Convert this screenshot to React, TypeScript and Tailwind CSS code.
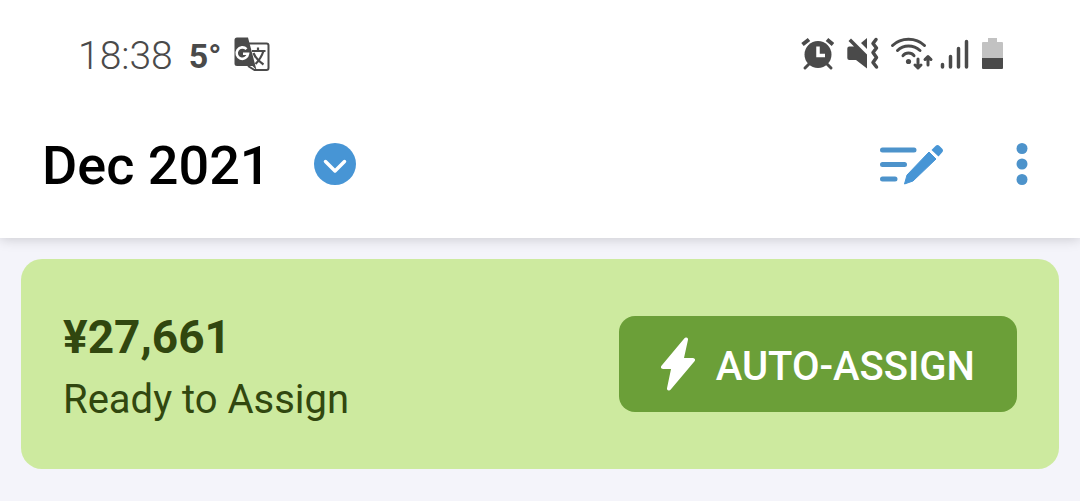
import type { ReactNode } from "react";

function StatusIcon({ width, children }: { width: number; children: ReactNode }) {
  return (
    <svg width={width} height="34" viewBox={`0 0 ${width} 34`} fill="none" className="shrink-0" aria-hidden="true">
      {children}
    </svg>
  );
}

function StatusBar() {
  return (
    <div className="flex items-center justify-between pl-[78px] pr-19 pt-8 text-[#4a4a4a]">
      <div className="flex items-center">
        <span className="pt-1 text-[39px] leading-10 font-light">18:38</span>
        <span className="ml-4 pt-1 text-[34px] leading-10 font-bold">5°</span>
        <span className="ml-3">
          <StatusIcon width={36}>
            <path d="M15 6.5h17.5a2 2 0 0 1 2 2V31a2 2 0 0 1-2 2H20.5L14 29" stroke="currentColor" strokeWidth="2" />
            <path d="M3 .5h11L22.5 33l-4-4H3a2.500 2.500 0 0 1-2.500-2.500V3A2.500 2.500 0 0 1 3 .5Z" fill="currentColor" />
            <path d="M12.500 12.200a5.700 5.700 0 1 0 1.500 4.600H9" stroke="white" strokeWidth="2.600" />
            <path d="M18 14h13.500M24 10.500V14M29.500 14c-2 6-4.500 9.500-8 13M19.500 16c2 5 5.500 8.500 10 11.500" stroke="currentColor" strokeWidth="2.200" />
          </StatusIcon>
        </span>
      </div>
      <div className="flex items-center">
        <StatusIcon width={34}>
          <path d="M9 27l-4 4M27 27l4 4" stroke="currentColor" strokeWidth="3" strokeLinecap="round" />
          <path d="M2.5 7.5 9 2.5M27 2.5 33 7.5" stroke="currentColor" strokeWidth="4" />
          <circle cx="18" cy="17.5" r="13.5" fill="currentColor" />
          <path d="M18 9.5V18.5H25" stroke="white" strokeWidth="3.5" />
        </StatusIcon>
        <span className="ml-3">
          <StatusIcon width={34}>
            <path d="M3.3 9.500H8L2.500 4 5 1.500 21 17.500V31.500L10 23H3.300a2 2 0 0 1-2-2V11.500a2 2 0 0 1 2-2Z" fill="currentColor" />
            <path d="M15 6 21 1v11Z" fill="currentColor" />
            <path
              d="M30 2.5 27 6.5 30.5 11 27 15.5 30.5 20.5 27 25.5 30.5 30"
              stroke="currentColor"
              strokeWidth="3.5"
              strokeLinecap="round"
              strokeLinejoin="round"
            />
          </StatusIcon>
        </span>
        <span className="ml-2.5">
          <StatusIcon width={44}>
            <g stroke="currentColor" strokeWidth="3" strokeLinecap="round" strokeLinejoin="round">
              <path d="M2.5 8.5Q9 2.3 18.500 2.3T34.5 8.5M7.5 13.5Q12 9 18.5 9T30 13.5M13 18.7Q15 16 18.5 16T24 18.7" />
              <path d="M28 22v9M25 28 28 31 31 28M38 28V19.5M35 22.5 38 19.5 41 22.5" />
            </g>
            <circle cx="18.5" cy="24.5" r="2.6" fill="currentColor" />
          </StatusIcon>
        </span>
        <span className="ml-1.5">
          <StatusIcon width={30}>
            <path
              d="M2.5 27.500V30M10.5 19.5V30M18.5 11.5V30M26.5 4.5V30"
              stroke="currentColor"
              strokeWidth="3.500"
              strokeLinecap="round"
            />
          </StatusIcon>
        </span>
        <span className="ml-3">
          <StatusIcon width={22}>
            <path d="M6 1h9v4h5a1 1 0 0 1 1 1v17H0V6a1 1 0 0 1 1-1h5Z" fill="#c2c2c2" />
            <path d="M0 21h21v10a1 1 0 0 1-1 1H1a1 1 0 0 1-1-1Z" fill="currentColor" />
          </StatusIcon>
        </span>
      </div>
    </div>
  );
}

function MonthBar() {
  return (
    <div className="flex items-center justify-between pl-[42px] pr-[51px] pt-14 pb-[42px]">
      <button type="button" className="flex items-center gap-[43px] text-black">
        <span className="pt-1 text-[54px] leading-[60px] font-medium">Dec 2021</span>
        <svg width="42" height="42" viewBox="0 0 42 42" fill="none" aria-hidden="true">
          <circle cx="21" cy="21" r="21" fill="#4795d5" />
          <path d="M11.5 18.5 21 28 30.5 18.5" stroke="white" strokeWidth="3.5" strokeLinecap="round" strokeLinejoin="round" />
        </svg>
      </button>
      <div className="flex items-center gap-[71px]">
        <button type="button" aria-label="Edit budget">
          <svg width="66" height="42" viewBox="0 0 66 42" fill="none" aria-hidden="true">
            <path d="M4.5 7H36M4.5 21.5H26.5M4.5 36H17" stroke="#4d93cb" strokeWidth="5" strokeLinecap="round" />
            <path d="M51 9 58 16 35 38 26.5 41 29 32Z" fill="#4795d5" stroke="#4795d5" strokeLinejoin="round" />
            <path d="M53.5 7 57.5 3Q59.5 1 61.5 3L64 5.500Q66 7.500 64 9.500L60.500 13.500Z" fill="#4795d5" />
          </svg>
        </button>
        <button type="button" aria-label="More options">
          <svg width="14" height="42" viewBox="0 0 14 42" fill="#4d93cb" aria-hidden="true">
            <circle cx="7" cy="5.5" r="5.5" />
            <circle cx="7" cy="21" r="5.5" />
            <circle cx="7" cy="36.5" r="5.5" />
          </svg>
        </button>
      </div>
    </div>
  );
}

export default function App() {
  return (
    <div className="min-h-screen bg-[#f4f4fa] font-['Roboto',sans-serif]">
      <header className="bg-white shadow-[0_1px_12px_rgba(0,0,0,0.18)]">
        <StatusBar />
        <MonthBar />
      </header>
      <main className="p-[21px]">
        <section className="flex items-center justify-between rounded-[21px] bg-[#cdea9f] p-[42px] text-[#31470f]">
          <div>
            <p className="text-[46px] leading-18 font-bold">¥27,661</p>
            <p className="text-[40px] leading-[54px]">Ready to Assign</p>
          </div>
          <button type="button" className="flex h-24 items-center gap-[21px] rounded-2xl bg-[#6b9f38] px-[42px] text-white">
            <svg width="34" height="54" viewBox="0 0 34 54" aria-hidden="true">
              <path
                d="M25 2.5 2 30H12.500L8 51.5 32 23H20.5L25 2.5Z"
                fill="currentColor"
                stroke="currentColor"
                strokeWidth="4"
                strokeLinejoin="round"
              />
            </svg>
            <span className="pt-1.5 text-[40px] leading-12 font-medium">AUTO-ASSIGN</span>
          </button>
        </section>
      </main>
    </div>
  );
}
